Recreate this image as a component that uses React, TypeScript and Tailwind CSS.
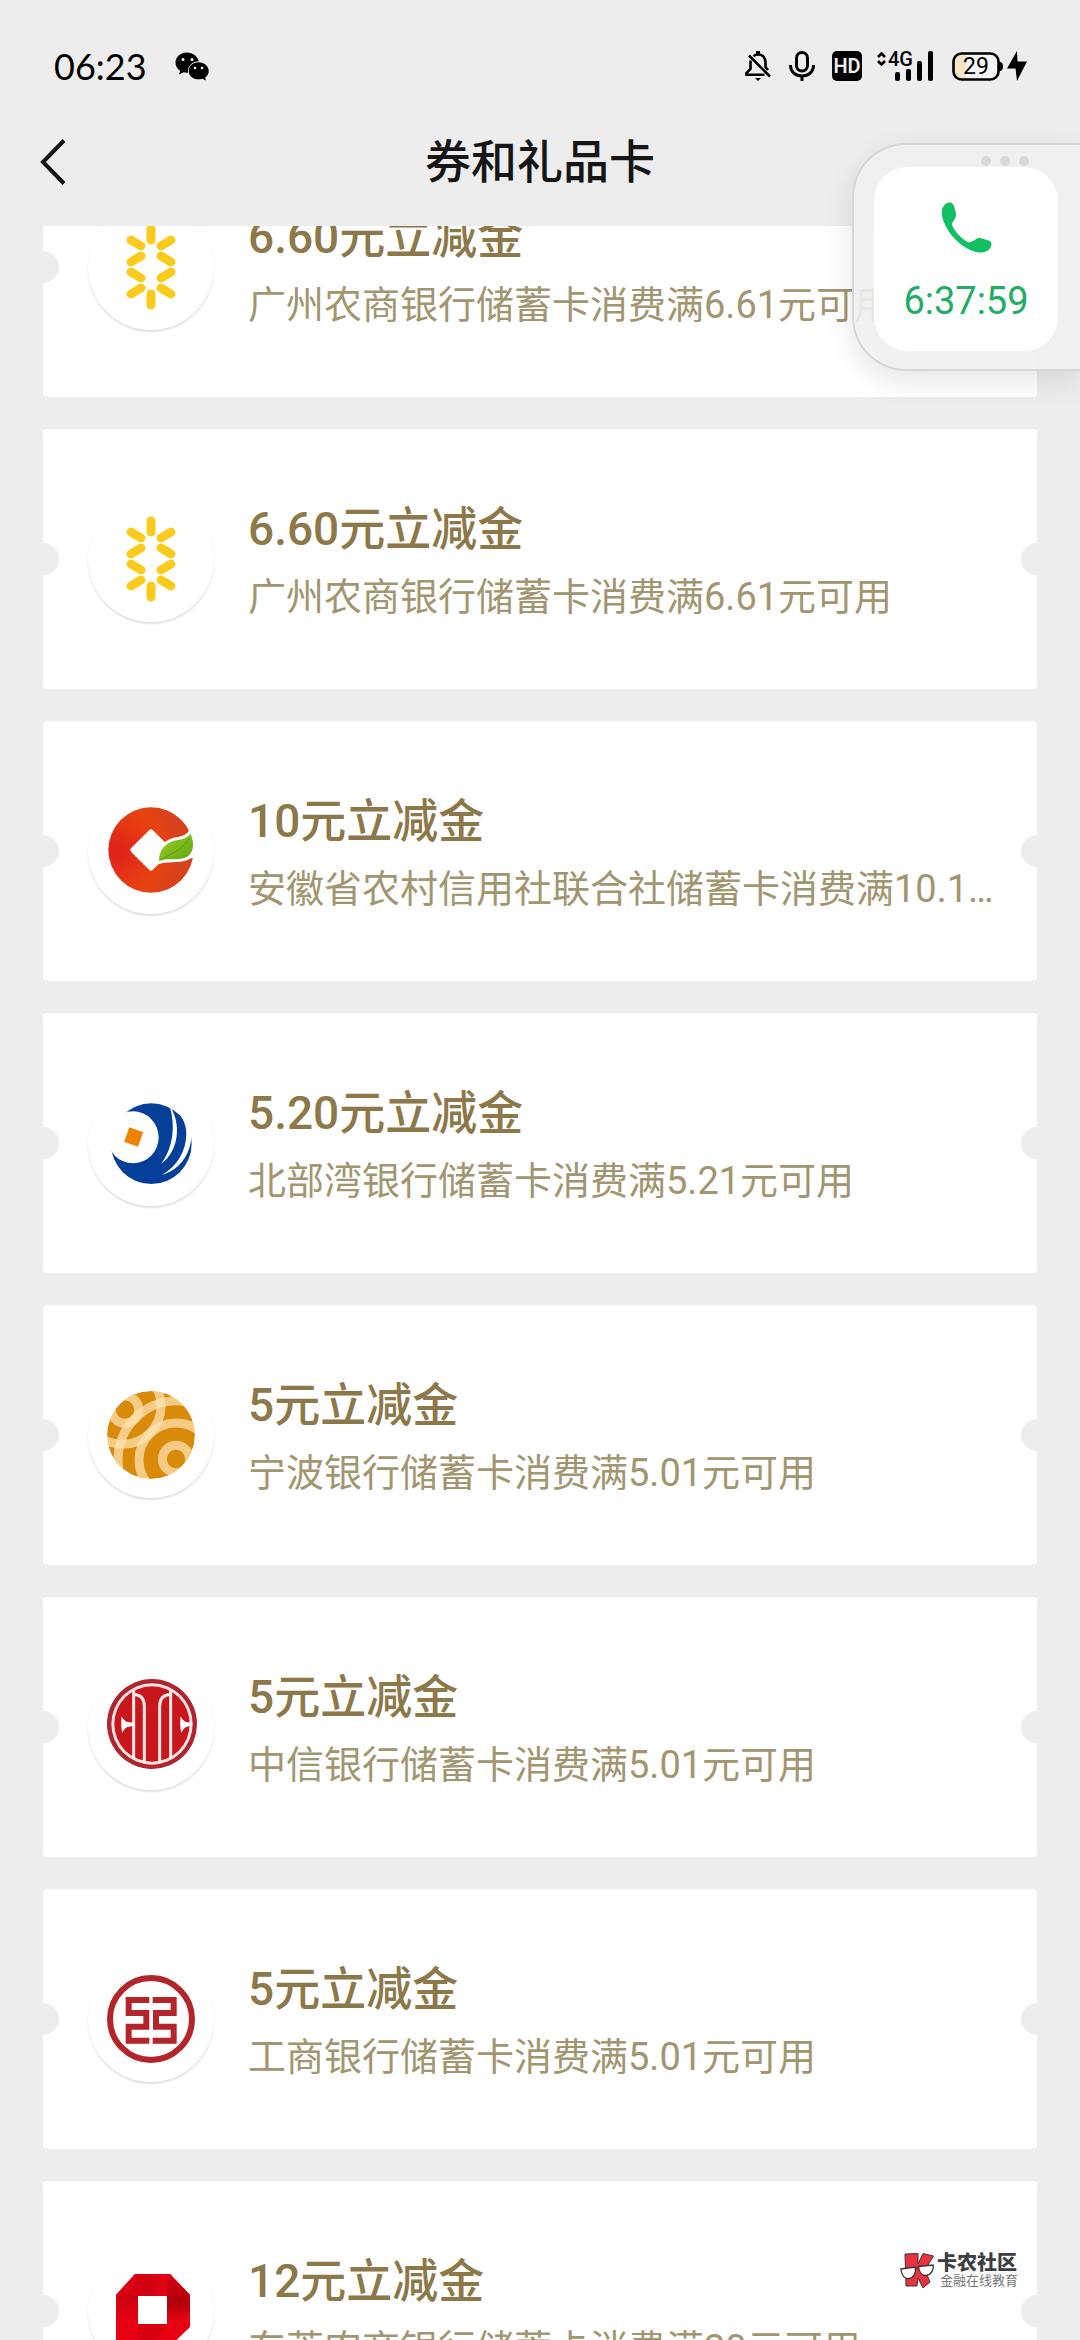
import type { ReactNode } from "react";

const FONT = "font-[Roboto,'Noto_Sans_CJK_SC',sans-serif]";

function GuangzhouLogo() {
  return (
    <svg viewBox="0 0 96 96" className="size-24" fill="none" stroke="#fbcb1c" strokeWidth="9" strokeLinecap="round" aria-hidden="true">
      <path d="M48 10V21M28 21L38 27M68 21L58 27M38 37L28 43M58 37L68 43M28 53L38 59M68 53L58 59M38 69L28 75M58 69L68 75M48 75V86" />
    </svg>
  );
}

function AnhuiLogo() {
  return (
    <svg viewBox="129 69 288 288" className="size-24" aria-hidden="true">
      <defs>
        <radialGradient id="anhui" gradientUnits="userSpaceOnUse" cx="170" cy="215" r="190">
          <stop offset="0" stopColor="#e0201c" />
          <stop offset="0.7" stopColor="#e84310" />
          <stop offset="1" stopColor="#d9401c" />
        </radialGradient>
        <linearGradient id="leaf" x1="0" y1="0" x2="1" y2="1">
          <stop offset="0" stopColor="#a6d22c" />
          <stop offset="0.5" stopColor="#7dba1b" />
          <stop offset="1" stopColor="#5fa313" />
        </linearGradient>
      </defs>
      <circle cx="273" cy="210" r="128" fill="url(#anhui)" />
      <rect x="227" y="164" width="92" height="92" rx="8" fill="#fff" transform="rotate(45 273 210)" />
      <path d="M385 154L410 140V232L385 236Z" fill="#fff" />
      <path
        d="M297 243C298 200 325 184 358 179C375 176 384 170 392 161C404 190 402 222 376 233C348 242 322 233 297 243Z"
        fill="url(#leaf)"
        stroke="#fff"
        strokeWidth="18"
        strokeLinejoin="round"
        paintOrder="stroke"
      />
      <path d="M300 240C330 222 360 215 388 176" fill="none" stroke="#5d9d15" strokeWidth="3" />
    </svg>
  );
}

function BeibuLogo() {
  return (
    <svg viewBox="129 75 288 288" className="size-24" aria-hidden="true">
      <circle cx="274" cy="221" r="121" fill="#04409a" />
      <ellipse cx="219" cy="202" rx="77" ry="78" fill="#fff" />
      <path d="M140 199L154 199C160 215 165 220 175 215L185 146L172 153L145 140Z" fill="#fff" />
      <path d="M329 108C366 160 356 245 304 281C340 230 347 170 329 108Z" fill="#fff" />
      <path d="M350 122C372 145 379 170 379 192C378 245 350 290 306 315C352 302 391 262 395 196L412 190V120Z" fill="#fff" />
      <rect x="199" y="178" width="44" height="46" fill="#f08200" transform="rotate(20 221 201)" />
    </svg>
  );
}

function NingboLogo() {
  return (
    <svg viewBox="129 81 288 288" className="size-24" aria-hidden="true">
      <defs>
        <clipPath id="ningbo">
          <circle cx="273" cy="225" r="132" />
        </clipPath>
      </defs>
      <g clipPath="url(#ningbo)">
        <circle cx="273" cy="225" r="132" fill="#d98a08" />
        <g fill="none" stroke="#ffe5b5" strokeOpacity="0.72" strokeWidth="27">
          <circle cx="195" cy="149" r="41" />
          <circle cx="188" cy="138" r="115" />
          <circle cx="348" cy="297" r="41" />
          <circle cx="348" cy="300" r="111" />
          <circle cx="352" cy="300" r="178" />
        </g>
      </g>
    </svg>
  );
}

function CiticLogo() {
  return (
    <svg viewBox="129 72 288 288" className="size-24" aria-hidden="true">
      <circle cx="276" cy="207" r="135" fill="#b02430" />
      <circle cx="276" cy="207" r="122" fill="#fbe3e3" />
      <circle cx="276" cy="207" r="113" fill="#c8161d" />
      <path
        d="M221 106V312M221 118C246 120 253 136 253 154V322M332 106V312M332 118C307 120 299 136 299 154V322"
        fill="none"
        stroke="#fbeaea"
        strokeWidth="9"
      />
      <path d="M185 184C192 200 202 203 221 203V214C202 214 194 218 187 234C183 218 183 200 185 184Z" fill="#fff" />
      <path d="M362 184C369 200 379 203 394 203V214C379 214 371 218 364 234C360 218 360 200 362 184Z" fill="#fff" />
    </svg>
  );
}

function IcbcLogo() {
  return (
    <svg viewBox="129 63 288 288" className="size-24" fill="none" stroke="#b3242b" aria-hidden="true">
      <circle cx="273" cy="207" r="123" strokeWidth="18" />
      <path d="M268 150H206V189H259V230H206V272H268M278 150H341V189H288V230H341V272H278" strokeWidth="18" />
    </svg>
  );
}

function DongguanLogo() {
  return (
    <svg viewBox="0 0 96 96" className="size-24" aria-hidden="true">
      <defs>
        <linearGradient id="dgTop">
          <stop offset="0" stopColor="#e50012" />
          <stop offset="0.6" stopColor="#cf0010" />
          <stop offset="1" stopColor="#ea0213" />
        </linearGradient>
        <linearGradient id="dgSide" x1="0" y1="0" x2="0" y2="1">
          <stop offset="0" stopColor="#d8000f" />
          <stop offset="0.6" stopColor="#b0000b" />
          <stop offset="1" stopColor="#ee0314" />
        </linearGradient>
        <linearGradient id="dgLeft" x1="0" y1="0" x2="0" y2="1">
          <stop offset="0" stopColor="#c9000f" />
          <stop offset="1" stopColor="#ea0213" />
        </linearGradient>
      </defs>
      <path d="M13 32L32 11H67L87 32V64L64 86H13Z" fill="#e60012" />
      <path d="M13 32L32 11H67L64 33H35Z" fill="url(#dgTop)" />
      <path d="M64 11H67L87 32V60H64Z" fill="url(#dgSide)" />
      <path d="M13 32H35V60H13Z" fill="url(#dgLeft)" />
      <path d="M35 60H64L50 86H35Z" fill="#d60010" />
      <rect x="35" y="33" width="29" height="28" fill="#fff" />
    </svg>
  );
}

type Coupon = { title: string; desc: string; logo: ReactNode };

const coupons: Coupon[] = [
  { title: "6.60元立减金", desc: "广州农商银行储蓄卡消费满6.61元可用", logo: <GuangzhouLogo /> },
  { title: "6.60元立减金", desc: "广州农商银行储蓄卡消费满6.61元可用", logo: <GuangzhouLogo /> },
  { title: "10元立减金", desc: "安徽省农村信用社联合社储蓄卡消费满10.1元可用", logo: <AnhuiLogo /> },
  { title: "5.20元立减金", desc: "北部湾银行储蓄卡消费满5.21元可用", logo: <BeibuLogo /> },
  { title: "5元立减金", desc: "宁波银行储蓄卡消费满5.01元可用", logo: <NingboLogo /> },
  { title: "5元立减金", desc: "中信银行储蓄卡消费满5.01元可用", logo: <CiticLogo /> },
  { title: "5元立减金", desc: "工商银行储蓄卡消费满5.01元可用", logo: <IcbcLogo /> },
  { title: "12元立减金", desc: "东莞农商银行储蓄卡消费满20元可用", logo: <DongguanLogo /> },
];

function CouponCard({ title, desc, logo }: Coupon) {
  return (
    <li className="relative flex h-[260px] shrink-0 items-center gap-[34px] overflow-hidden rounded bg-white pr-10 pl-[45px]">
      <span className="absolute top-1/2 -left-4 size-8 -translate-y-1/2 rounded-full bg-[#ededed]" />
      <span className="absolute top-1/2 -right-4 size-8 -translate-y-1/2 rounded-full bg-[#ededed]" />
      <div className="flex size-[126px] shrink-0 items-center justify-center rounded-full bg-white shadow-[0_2px_2px_rgba(0,0,0,0.12)]">
        {logo}
      </div>
      <div className="min-w-0 flex-1 pt-1">
        <h2 className="text-[46px] leading-[72px] font-medium text-[#8c7848]">{title}</h2>
        <p className="truncate text-[38px] leading-[64px] text-[#a19670]">{desc}</p>
      </div>
    </li>
  );
}

function StatusBar() {
  return (
    <div className="flex h-8 items-center justify-between pr-[53px] pl-[54px] text-black">
      <div className="flex items-center gap-7">
        <span className="font-[Lato,sans-serif] text-[36px] leading-8">06:23</span>
        <svg viewBox="0 0 34 29" className="h-[29px] w-[34px]" aria-hidden="true">
          <path d="M12 0.500C5.400 0.500 0.500 5 0.500 10.500C0.500 14 2.300 17 5.200 18.800L4 22.500L8.500 20.300C10 20.700 11.500 20.800 13 20.700C12.300 14 17 9.600 23.700 9.200C22.500 4 17.800 0.500 12 0.500Z" />
          <path d="M23.500 10.300C18 10.300 13.700 14 13.700 18.900C13.700 23.700 18 27.300 23.500 27.300C24.900 27.300 26.200 27.100 27.400 26.700L31 28.600L30.200 25.400C32.400 23.800 33.700 21.500 33.700 18.900C33.700 14 29 10.300 23.500 10.300Z" />
          <g fill="#ededed">
            <circle cx="8" cy="7.500" r="1.500" />
            <circle cx="17" cy="7.500" r="1.500" />
            <circle cx="20" cy="16" r="1.300" />
            <circle cx="27" cy="16" r="1.300" />
          </g>
        </svg>
      </div>
      <div className="flex items-center">
        <svg viewBox="0 0 26 30" className="mr-[18px] h-[30px] w-[26px]" fill="none" stroke="#000" strokeWidth="2.600" aria-hidden="true">
          <path d="M8.500 5.200C10 4 11.500 3.500 13 3.500C17.500 3.500 20.500 6.800 20.500 11.500V16L23 19M5.500 9.500V18L1.500 22V23.700H19.500M4 4.500L25 25.500" />
          <path d="M13 0V4" strokeWidth="4" />
          <path d="M10 27H16L13 30Z" fill="#000" stroke="none" />
        </svg>
        <svg viewBox="0 0 26 30" className="mr-[17px] h-[30px] w-[26px]" fill="none" stroke="#000" strokeWidth="3" aria-hidden="true">
          <rect x="7.500" y="1.500" width="11" height="18.500" rx="5.500" />
          <path d="M1.500 14C1.500 21 6.500 25 13 25S24.500 21 24.500 14M13 25V30" />
        </svg>
        <span className="mr-[14px] flex size-[30px] items-center justify-center rounded-[5px] bg-black text-[20px] leading-none font-semibold text-[#ededed]">
          HD
        </span>
        <div className="relative mr-[18px] h-[30px] w-[58px]">
          <svg viewBox="0 0 58 30" className="size-full" aria-hidden="true">
            <path d="M2 6L5.500 2.500L9 6M2 10L5.500 13.500L9 10" fill="none" stroke="#000" strokeWidth="2.600" />
            <g>
              <rect x="19" y="21" width="5" height="9" rx="2" />
              <rect x="30" y="18" width="5" height="12" rx="2" />
              <rect x="41" y="10" width="5" height="20" rx="2" />
              <rect x="52" y="0" width="5" height="30" rx="2" />
            </g>
          </svg>
          <span className="absolute top-0 left-3 text-[20px] leading-4 font-medium">4G</span>
        </div>
        <div className="relative mr-1 flex h-[29px] w-[51px]">
          <svg viewBox="0 0 51 29" className="size-full" aria-hidden="true">
            <rect x="1.500" y="1.500" width="45" height="26" rx="8" fill="#f4f4f4" />
            <path d="M14 1.500H9.500A8 8 0 0 0 1.500 9.500V19.500A8 8 0 0 0 9.500 27.500H14Z" fill="#f5e6c6" />
            <rect x="1.500" y="1.500" width="45" height="26" rx="8" fill="none" stroke="#000" strokeWidth="2.600" />
            <path d="M47 10C50 10 51 12 51 14.500S50 19 47 19Z" />
          </svg>
          <span className="absolute inset-y-0 left-0 w-12 text-center text-[23px] leading-[29px]">29</span>
        </div>
        <svg viewBox="0 0 20 30" className="h-[30px] w-[20px]" aria-hidden="true">
          <path d="M10 0L0 17.500H8.500L10 30L20 10.500H10.500Z" />
        </svg>
      </div>
    </div>
  );
}

function CallWindow() {
  return (
    <aside className="absolute top-[143px] right-0 w-[228px] rounded-l-[54px] border-2 border-r-0 border-[#d6d6d6] bg-[#efefef]/90 pt-[22px] pr-[22px] pb-[18px] pl-5 shadow-[0_10px_30px_rgba(0,0,0,0.1)]">
      <div className="absolute top-[11px] right-[51px] flex gap-[9px]">
        <span className="size-[10px] rounded-full bg-[#d8d8d8]" />
        <span className="size-[10px] rounded-full bg-[#d8d8d8]" />
        <span className="size-[10px] rounded-full bg-[#d8d8d8]" />
      </div>
      <button type="button" className="flex h-[184px] w-full flex-col items-center rounded-[34px] bg-white pt-[35px]">
        <svg viewBox="0 0 51 51" className="size-[51px]" aria-hidden="true">
          <path
            d="M8 0.500C11.500 -0.200 13 3 14 7.500C15 11 15.800 13.500 14 16.500C12.800 18.500 11.500 20 10.800 22.500C14 30 21 37.500 28 40.500C31 40 34 37.500 37 36C40 35.500 44 37.500 47.500 38.500C51 39.500 51 43 49.500 45.500C47.500 49.500 43 51 38 50.500C22 48.500 3 30 0.800 12C0.200 6.500 3 1.500 8 0.500Z"
            fill="#12bf62"
          />
        </svg>
        <span className="mt-7 text-[38px] leading-10 text-[#22ad66]">6:37:59</span>
      </button>
    </aside>
  );
}

function Watermark() {
  return (
    <div className="absolute right-[62px] bottom-[51px] flex items-center gap-[3px]">
      <svg viewBox="0 0 34 36" className="h-9 w-[34px]" aria-hidden="true">
        <g fill="#e8323f" stroke="#3b3538" strokeWidth="1" strokeLinejoin="round">
          <path d="M5 1L18 0.500L18 11L23 0.500L33.500 3L25 17L30 29L23 35L18 25L17 33L6 33Z" />
        </g>
        <g fill="#fff" stroke="#3b3538" strokeWidth="1.300">
          <path d="M0.800 16L15 14C17 20 13 25 9 25.500C4 26 1.500 21 0.800 16Z" />
          <path d="M18.500 13.500L33 12C34 17 31 22 26 22.500C22 22.500 19 19 18.500 13.500Z" />
          <path d="M15 15.500L18.500 14.500" />
        </g>
      </svg>
      <div className="flex flex-col">
        <span className="text-[20px] leading-5 font-black text-[#3d3d42]">卡农社区</span>
        <span className="pl-[3px] text-[13px] leading-4 text-[#77777b]">金融在线教育</span>
      </div>
    </div>
  );
}

export default function App() {
  return (
    <div className={`relative flex h-screen flex-col overflow-hidden bg-[#ededed] ${FONT}`} lang="zh-CN">
      <header className="shrink-0 pt-[50px]">
        <StatusBar />
        <div className="grid h-36 grid-cols-[120px_1fr_120px] items-center pt-4">
          <button type="button" aria-label="返回" className="flex h-16 items-center pl-10">
            <svg viewBox="0 0 26 46" className="h-[46px] w-[26px]" fill="none" stroke="#161616" strokeWidth="4" aria-hidden="true">
              <path d="M24 1.500L3 23L24 44.500" />
            </svg>
          </button>
          <h1 className="text-center text-[46px] leading-16 font-medium text-[#161616]">券和礼品卡</h1>
        </div>
      </header>
      <main className="min-h-0 flex-1 overflow-hidden px-[43px]">
        <ul className="-mt-[89px] flex flex-col gap-8">
          {coupons.map((c, i) => (
            <CouponCard key={i} {...c} />
          ))}
        </ul>
      </main>
      <CallWindow />
      <Watermark />
    </div>
  );
}
